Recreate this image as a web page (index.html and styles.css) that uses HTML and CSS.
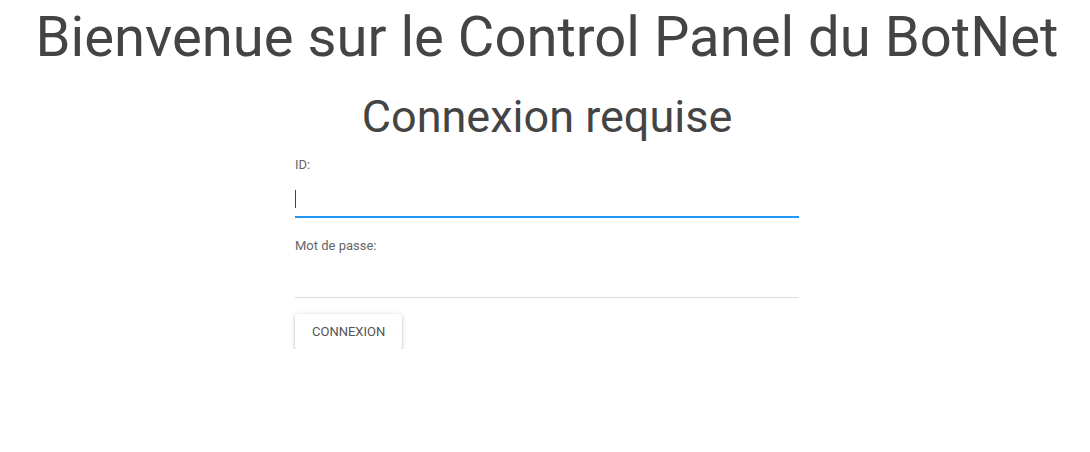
FILE: index.html
```html
<!DOCTYPE html>
<html lang="fr">
<head>
<meta charset="utf-8">
<title>Control Panel</title>
<link rel="stylesheet" href="styles.css">
</head>
<body>
<main class="page">
  <h1 class="title">Bienvenue sur le Control Panel du BotNet</h1>
  <h2 class="subtitle">Connexion requise</h2>
  <form class="login">
    <div class="field">
      <label class="label" for="id">ID:</label>
      <div class="input-wrap">
        <input class="input input-focus" id="id" type="text">
        <span class="caret"></span>
      </div>
    </div>
    <div class="field">
      <label class="label" for="pw">Mot de passe:</label>
      <div class="input-wrap">
        <input class="input" id="pw" type="password">
      </div>
    </div>
    <div class="actions">
      <button class="btn" type="button">Connexion</button>
    </div>
  </form>
</main>
</body>
</html>
```

FILE: styles.css
```css
html, body {
  margin: 0;
  padding: 0;
  background: #fff;
}
body {
  font-family: Roboto, "Liberation Sans", sans-serif;
  color: #444;
}
.page {
  display: flex;
  flex-direction: column;
  align-items: center;
  padding-left: 4px;
}
.title {
  margin: 7px 0 0;
  font-size: 56.2px;
  font-weight: 400;
  line-height: 1.1;
  color: #444;
  white-space: nowrap;
}
.subtitle {
  margin: 23px 0 0;
  font-size: 45px;
  font-weight: 400;
  line-height: 1.1;
  color: #444;
}
.login {
  width: 504px;
  margin-top: 15px;
  display: flex;
  flex-direction: column;
}
.field {
  display: flex;
  flex-direction: column;
  margin-bottom: 20px;
}
.field + .field {
  margin-bottom: 16px;
}
.label {
  font-size: 13px;
  line-height: 18px;
  color: #666;
}
.input-wrap {
  position: relative;
}
.input {
  display: block;
  width: 100%;
  box-sizing: content-box;
  height: 42px;
  padding: 0;
  margin: 0;
  border: none;
  border-bottom: 1px solid #ddd;
  outline: none;
  background: transparent;
  font-family: inherit;
  font-size: 16px;
  color: #333;
}
.input-focus {
  border-bottom: 1px solid #2196f3;
  box-shadow: 0 1px 0 0 #2196f3;
}
.caret {
  position: absolute;
  left: 0;
  top: 16px;
  width: 1px;
  height: 18px;
  background: #444;
}
.actions {
  display: flex;
}
.btn {
  height: 35px;
  padding: 0 17px;
  border: none;
  border-radius: 2px;
  background: #fff;
  color: #555;
  font-family: inherit;
  font-size: 13px;
  text-transform: uppercase;
  box-shadow: 0 2px 2px 0 rgba(0,0,0,.14), 0 3px 1px -2px rgba(0,0,0,.12), 0 1px 5px 0 rgba(0,0,0,.2);
  cursor: pointer;
}
```
